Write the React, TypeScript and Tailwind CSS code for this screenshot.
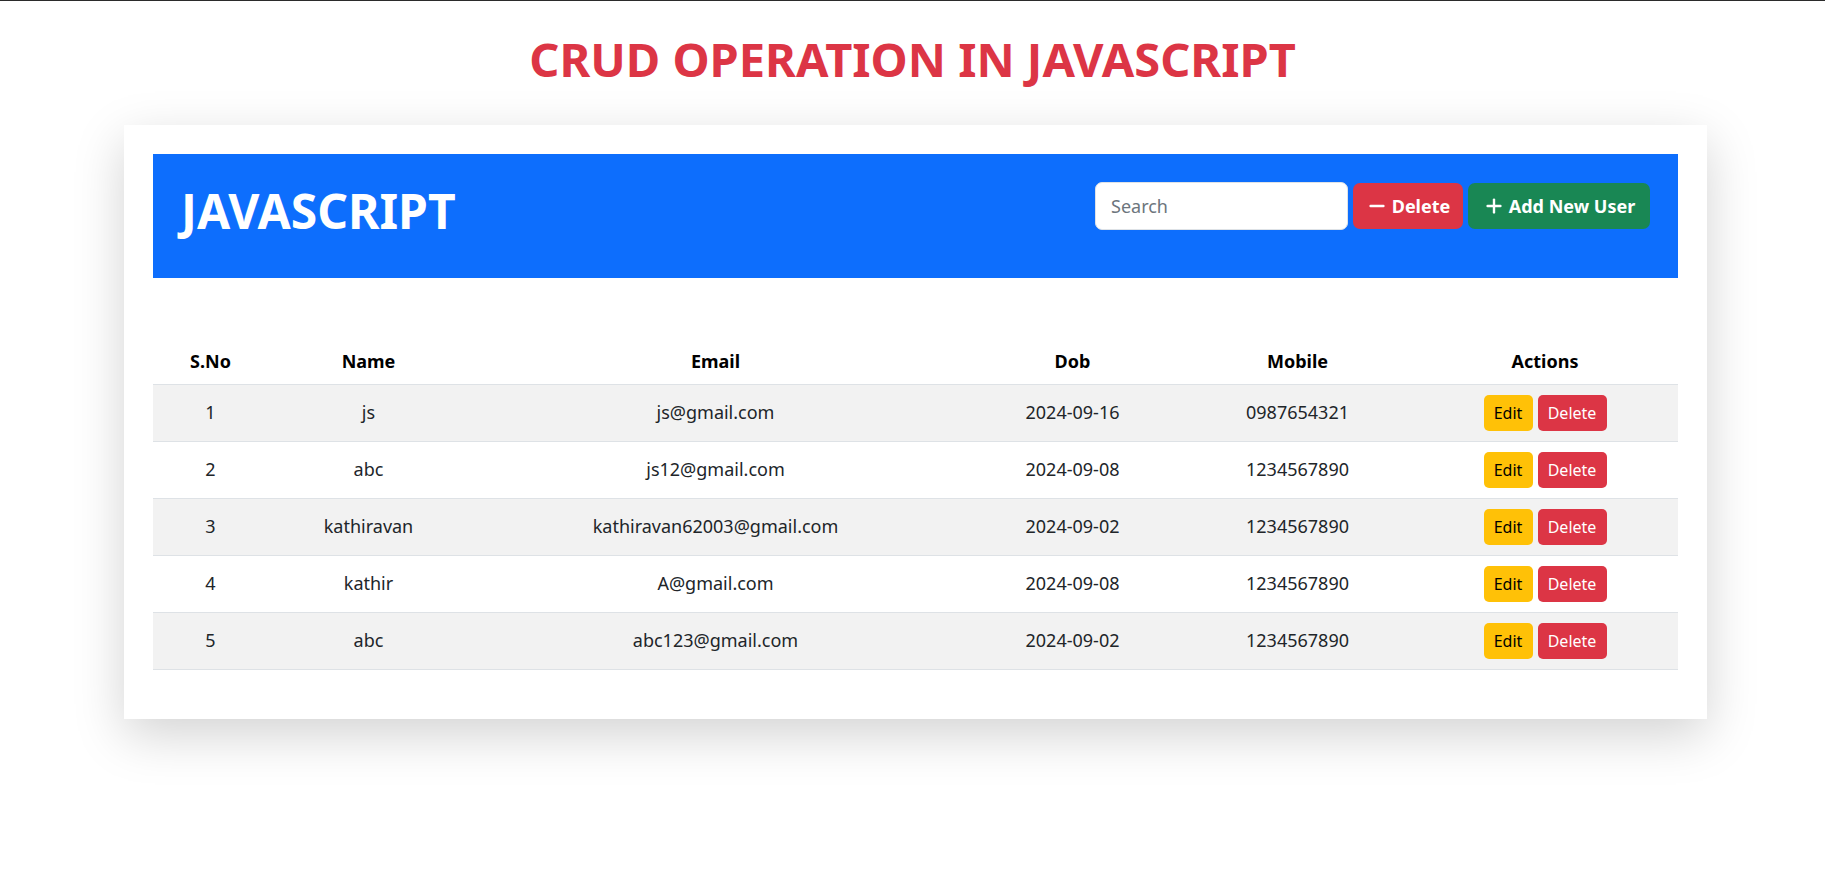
import { Minus, Plus } from 'lucide-react';

type User = {
  id: number;
  name: string;
  email: string;
  dob: string;
  mobile: string;
};

const users: User[] = [
  { id: 1, name: 'js', email: 'js@gmail.com', dob: '2024-09-16', mobile: '0987654321' },
  { id: 2, name: 'abc', email: 'js12@gmail.com', dob: '2024-09-08', mobile: '1234567890' },
  { id: 3, name: 'kathiravan', email: 'kathiravan62003@gmail.com', dob: '2024-09-02', mobile: '1234567890' },
  { id: 4, name: 'kathir', email: 'A@gmail.com', dob: '2024-09-08', mobile: '1234567890' },
  { id: 5, name: 'abc', email: 'abc123@gmail.com', dob: '2024-09-02', mobile: '1234567890' },
];

export default function App() {
  return (
    <div
      className="min-h-screen border-t border-[#2b2b2b] bg-white pb-10"
      style={{ fontFamily: '"Noto Sans", "Open Sans", sans-serif' }}
    >
      {/* Page title */}
      <h1 className="mt-[30px] text-center text-[47px] font-bold leading-[1.2] text-[#dc3545]">
        CRUD OPERATION IN JAVASCRIPT
      </h1>

      {/* Card */}
      <div className="ml-[124px] mt-[38px] w-[1583px] bg-white px-[29px] pb-[49px] pt-[29px] shadow-[0_16px_48px_rgba(0,0,0,0.175)]">
        {/* Blue header */}
        <div className="flex h-[124px] items-start justify-between bg-[#0d6efd] px-[28px] pt-[28px]">
          <h2 className="text-[48px] font-bold leading-[1.2] text-white">JAVASCRIPT</h2>
          <div className="flex items-center gap-[5px]">
            <input
              type="text"
              placeholder="Search"
              className="h-[48px] w-[253px] rounded-[7px] border border-[#dee2e6] bg-white px-[15px] text-[18px] text-[#212529] outline-none placeholder:text-[#6c757d]"
            />
            <button className="flex h-[46px] w-[110px] items-center justify-center gap-[4px] rounded-[7px] bg-[#dc3545] text-[18px] font-bold text-white">
              <Minus className="h-[22px] w-[22px]" strokeWidth={2.6} />
              Delete
            </button>
            <button className="flex h-[46px] w-[182px] items-center justify-center gap-[4px] rounded-[7px] bg-[#198754] text-[18px] font-bold text-white">
              <Plus className="h-[22px] w-[22px]" strokeWidth={2.6} />
              Add New User
            </button>
          </div>
        </div>

        {/* Table */}
        <table className="mt-[55px] w-full table-fixed border-collapse text-center text-[18px] text-[#212529]">
          <colgroup>
            <col className="w-[115px]" />
            <col className="w-[201px]" />
            <col className="w-[493px]" />
            <col className="w-[221px]" />
            <col className="w-[229px]" />
            <col className="w-[266px]" />
          </colgroup>
          <thead>
            <tr className="h-[51px] border-b border-[#dee2e6] text-black">
              <th className="pt-[6px] font-bold">S.No</th>
              <th className="pt-[6px] font-bold">Name</th>
              <th className="pt-[6px] font-bold">Email</th>
              <th className="pt-[6px] font-bold">Dob</th>
              <th className="pt-[6px] font-bold">Mobile</th>
              <th className="pt-[6px] font-bold">Actions</th>
            </tr>
          </thead>
          <tbody>
            {users.map((u, i) => (
              <tr
                key={u.id}
                className={`h-[49px] border-b border-[#dee2e6] ${i % 2 === 0 ? 'bg-[#f2f2f2]' : 'bg-white'}`}
              >
                <td className="py-[10px] align-middle">{u.id}</td>
                <td className="py-[10px] align-middle">{u.name}</td>
                <td className="py-[10px] align-middle">{u.email}</td>
                <td className="py-[10px] align-middle">{u.dob}</td>
                <td className="py-[10px] align-middle">{u.mobile}</td>
                <td className="py-[10px] align-middle">
                  <div className="flex items-center justify-center gap-[5px]">
                    <button className="h-[36px] w-[49px] rounded-[5px] bg-[#ffc107] text-[16px] text-black">
                      Edit
                    </button>
                    <button className="h-[36px] w-[69px] rounded-[5px] bg-[#dc3545] text-[16px] text-white">
                      Delete
                    </button>
                  </div>
                </td>
              </tr>
            ))}
          </tbody>
        </table>
      </div>
    </div>
  );
}
